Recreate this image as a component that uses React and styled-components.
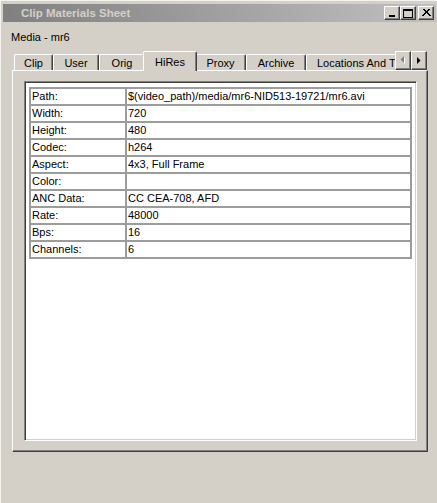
import React from "react";
import styled, { createGlobalStyle } from "styled-components";

const GlobalStyle = createGlobalStyle`
  html, body {
    margin: 0;
    padding: 0;
    background: #d4d0c8;
  }
  body {
    font-family: "Liberation Sans", Arial, sans-serif;
    font-size: 11px;
    color: #000;
  }
`;

const Window = styled.div`
  width: 437px;
  height: 503px;
  box-sizing: border-box;
  background: #d4d0c8;
  border-top: 1px solid #f4f3ee;
  border-left: 1px solid #f4f3ee;
  padding: 3px 1px 0 2px;
  display: flex;
  flex-direction: column;
`;

const TitleBar = styled.div`
  height: 18px;
  flex: none;
  display: flex;
  align-items: center;
  justify-content: space-between;
  padding: 0 2px 0 18px;
  background: linear-gradient(to right, #808080, #c0c0c0);
  color: #d4d0c8;
  font-weight: bold;
  font-size: 11.5px;
`;

const CaptionButtons = styled.div`
  display: flex;
  align-items: center;

  button + button:last-child {
    margin-left: 2px;
  }
`;

const RaisedButton = styled.button`
  box-sizing: border-box;
  width: ${(p) => p.$w || 16}px;
  height: ${(p) => p.$h || 14}px;
  padding: 0;
  margin: 0;
  display: flex;
  align-items: center;
  justify-content: center;
  background: #d4d0c8;
  border: 1px solid;
  border-color: #fff #404040 #404040 #fff;
  box-shadow: inset -1px -1px #808080;
`;

const Body = styled.div`
  flex: 1;
  display: flex;
  flex-direction: column;
  padding: 0 8px 51px 9px;
`;

const Caption = styled.div`
  height: 15px;
  line-height: 15px;
  margin-top: 8px;
  margin-left: -1px;
`;

const TabStrip = styled.div`
  height: 20px;
  margin-top: 6px;
  margin-bottom: -1px;
  display: flex;
  position: relative;
  z-index: 1;
`;

const TabList = styled.div`
  flex: 1;
  display: flex;
  overflow: hidden;
  padding-left: 2px;
`;

const Tab = styled.div`
  box-sizing: border-box;
  flex: none;
  width: ${(p) => (p.$w ? `${p.$w + (p.$active ? 4 : 0)}px` : "auto")};
  height: ${(p) => (p.$active ? 20 : 16)}px;
  margin: ${(p) => (p.$active ? "0 -2px" : "3px 0 0")};
  padding: ${(p) => (p.$w ? "0" : "0 10px")};
  display: flex;
  align-items: center;
  justify-content: ${(p) => (p.$w ? "center" : "flex-start")};
  white-space: nowrap;
  background: #d4d0c8;
  border-top: 1px solid #fff;
  border-left: 1px solid #fff;
  border-right: 1px solid #404040;
  border-radius: 2px 2px 0 0;
  box-shadow: inset -1px 0 #808080;
  position: relative;
  z-index: ${(p) => (p.$active ? 2 : 1)};
`;

const Scroller = styled.div`
  flex: none;
  display: flex;
  height: 19px;
  margin-right: 1px;
`;

const Panel = styled.div`
  flex: 1;
  display: flex;
  border: 1px solid;
  border-color: #fff #404040 #404040 #fff;
  box-shadow: inset -1px -1px #808080;
  padding: 10px 10px 10px 11px;
`;

const Sheet = styled.div`
  flex: 1;
  background: #fff;
  border: 1px solid;
  border-color: #808080 #fff #fff #808080;
  box-shadow: inset 1px 1px #404040, inset -1px -1px #d4d0c8;
  padding: 5px 4px;
`;

const Table = styled.table`
  width: 100%;
  border-collapse: collapse;

  td {
    border: 2px solid #9c9c9c;
    height: 15px;
    line-height: 15px;
    padding: 0 1px;
    white-space: nowrap;
    font-size: 11px;
  }

  td:first-child {
    width: 92px;
  }
`;

const Arrow = ({ dir, disabled }) => (
  <svg width="8" height="9" viewBox="0 0 8 9">
    {dir === "left" ? (
      <>
        {disabled && <polygon points="6,1 6,8 2.5,4.5" fill="#fff" />}
        <polygon points="5,0 5,7 1.5,3.5" fill={disabled ? "#808080" : "#000"} />
      </>
    ) : (
      <polygon points="2,1 2,8 5.5,4.5" fill="#000" />
    )}
  </svg>
);

const tabs = [
  { label: "Clip", w: 39 },
  { label: "User", w: 46 },
  { label: "Orig", w: 46 },
  { label: "HiRes", w: 50, active: true },
  { label: "Proxy", w: 51 },
  { label: "Archive", w: 60 },
  { label: "Locations And Tracks" },
];

const rows = [
  ["Path:", "$(video_path)/media/mr6-NID513-19721/mr6.avi"],
  ["Width:", "720"],
  ["Height:", "480"],
  ["Codec:", "h264"],
  ["Aspect:", "4x3, Full Frame"],
  ["Color:", ""],
  ["ANC Data:", "CC CEA-708, AFD"],
  ["Rate:", "48000"],
  ["Bps:", "16"],
  ["Channels:", "6"],
];

export default function App() {
  return (
    <>
      <GlobalStyle />
      <Window>
        <TitleBar>
          <span>Clip Materials Sheet</span>
          <CaptionButtons>
            <RaisedButton aria-label="Minimize">
              <svg width="8" height="8" viewBox="0 0 8 8">
                <rect x="1" y="6" width="6" height="2" fill="#000" />
              </svg>
            </RaisedButton>
            <RaisedButton aria-label="Maximize">
              <svg width="10" height="9" viewBox="0 0 10 9">
                <rect x="0.5" y="0.5" width="9" height="8" fill="none" stroke="#000" />
                <rect x="0" y="0" width="10" height="2" fill="#000" />
              </svg>
            </RaisedButton>
            <RaisedButton aria-label="Close">
              <svg width="9" height="8" viewBox="0 0 9 8">
                <path d="M1 0 L8 7 M8 0 L1 7 M2 0 L9 7 M7 0 L0 7" stroke="#000" strokeWidth="1" />
              </svg>
            </RaisedButton>
          </CaptionButtons>
        </TitleBar>
        <Body>
          <Caption>Media - mr6</Caption>
          <TabStrip>
            <TabList>
              {tabs.map((t) => (
                <Tab key={t.label} $w={t.w} $active={t.active}>
                  {t.label}
                </Tab>
              ))}
            </TabList>
            <Scroller>
              <RaisedButton $w={16} $h={19}>
                <Arrow dir="left" disabled />
              </RaisedButton>
              <RaisedButton $w={16} $h={19}>
                <Arrow dir="right" />
              </RaisedButton>
            </Scroller>
          </TabStrip>
          <Panel>
            <Sheet>
              <Table>
                <tbody>
                  {rows.map(([k, v]) => (
                    <tr key={k}>
                      <td>{k}</td>
                      <td>{v}</td>
                    </tr>
                  ))}
                </tbody>
              </Table>
            </Sheet>
          </Panel>
        </Body>
      </Window>
    </>
  );
}
